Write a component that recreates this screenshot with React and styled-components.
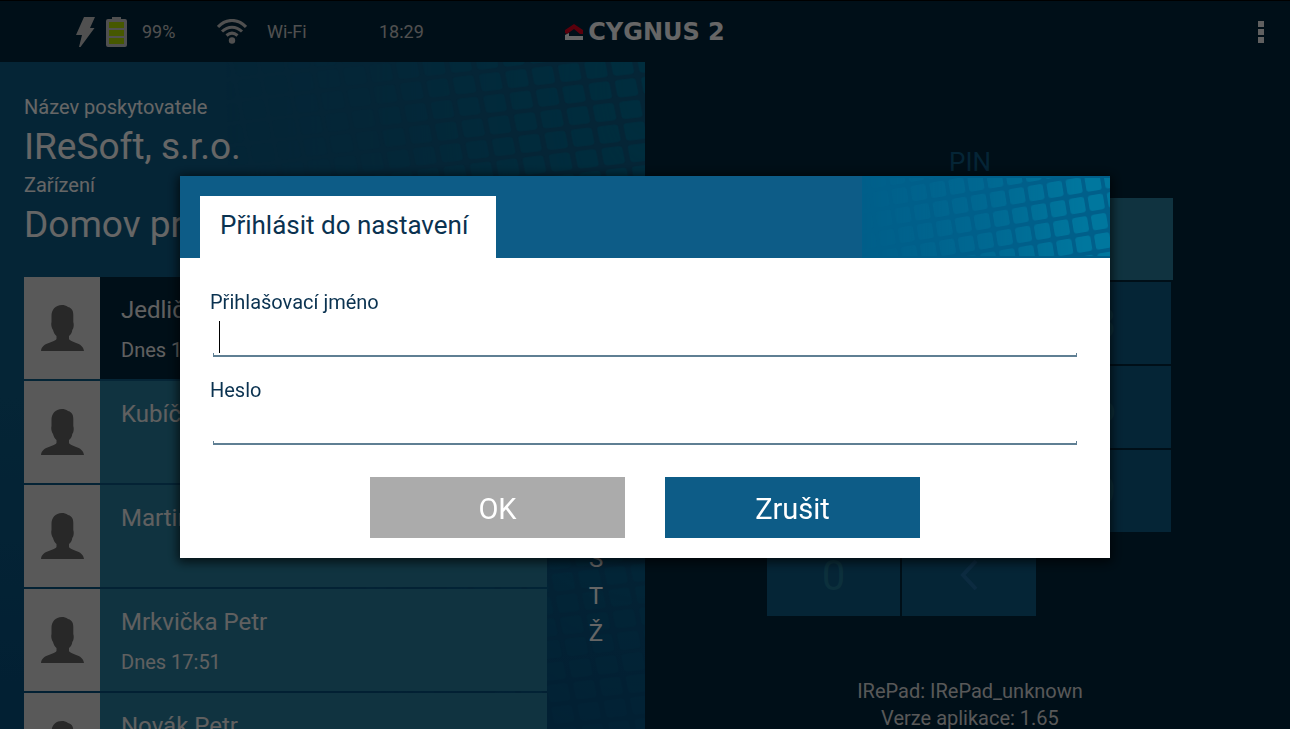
import React, { useState } from "react";
import styled, { createGlobalStyle } from "styled-components";

const people = [
  { name: "Jedlička Jan", time: "Dnes 17:58", active: true },
  { name: "Kubíčková Jana" },
  { name: "Martinů Karel" },
  { name: "Mrkvička Petr", time: "Dnes 17:51" },
  { name: "Novák Petr" },
];

const letters = ["J", "K", "L", "M", "N", "P", "R", "S", "T", "Ž"];
const keys = ["1", "2", "3", "4", "5", "6", "7", "8", "9", "0"];

const BoltIcon = () => (
  <svg width="20" height="30" viewBox="0 0 20 30" aria-hidden="true">
    <path d="M8 0h11l-5 11h4.500L4.500 30H3l3-12H0z" fill="#c8c8c8" />
  </svg>
);

const BatteryIcon = () => (
  <svg width="21" height="30" viewBox="0 0 21 30" aria-hidden="true">
    <path
      d="M6 0h9v2h4a2 2 0 0 1 2 2v24a2 2 0 0 1-2 2H2a2 2 0 0 1-2-2V4a2 2 0 0 1 2-2h4z"
      fill="#c8c8c8"
    />
    <path d="M3 5h15v6H3zM3 13h15v6H3zM3 21h15v6H3z" fill="#b0dc00" />
  </svg>
);

const WifiIcon = () => (
  <svg width="30" height="26" viewBox="0 0 30 26" aria-hidden="true">
    <g fill="none" stroke="#c8c8c8" strokeWidth="3">
      <path d="M1 8C9-.8 21-.8 29 8" />
      <path d="M5 12.500c6-5.800 14-5.800 20 0" />
      <path d="M9.500 16.500c3.500-3 7.500-3 11 0" />
    </g>
    <circle cx="15" cy="21.500" r="3.200" fill="#c8c8c8" />
  </svg>
);

const HouseIcon = () => (
  <svg width="18" height="16" viewBox="0 0 18 16" aria-hidden="true">
    <path d="M0 9V6l9-6 9 6v4h-3L9 5 2 10z" fill="#e0001f" />
    <path d="M0 11l4-2v3h14v4H0z" fill="#fff" />
  </svg>
);

const PersonIcon = () => (
  <svg width="43" height="46" viewBox="0 0 43 46" aria-hidden="true">
    <path
      d="M21 0C14 0 10.500 5 10.500 11v6C9.800 19 10.500 23 12 25c.8 3 2 5 3.500 6v3C13 38 1 37 0 46h43c-1-9-13-8-15-12v-3c1.500-1 3-3 3.300-6 1.700-2 1.700-6 1-8v-7c.2-6-3.300-7.500-5.300-8-2-1.400-4-2-6-2z"
      fill="#646464"
    />
  </svg>
);

const BackIcon = () => (
  <svg width="18" height="30" viewBox="0 0 18 30" aria-hidden="true">
    <path d="M16 1L3 15l13 14" fill="none" stroke="#1f6ba0" strokeWidth="4" />
  </svg>
);

const PanelTiles = () => (
  <svg width="420" height="668" viewBox="0 0 420 668" aria-hidden="true">
    <defs>
      <pattern
        id="panelTile"
        width="20"
        height="20"
        patternUnits="userSpaceOnUse"
        patternTransform="matrix(1.315 -0.155 0.215 1.08 382 -5)"
      >
        <rect x="2" y="2" width="16" height="16" rx="3" fill="#00729c" />
      </pattern>
      <radialGradient
        id="panelFade"
        gradientUnits="userSpaceOnUse"
        cx="420"
        cy="20"
        r="420"
        gradientTransform="matrix(1 0 0 2 0 -20)"
      >
        <stop offset="0" stopColor="#fff" />
        <stop offset="0.300" stopColor="#fff" stopOpacity="0.700" />
        <stop offset="0.600" stopColor="#fff" stopOpacity="0.250" />
        <stop offset="1" stopColor="#fff" stopOpacity="0" />
      </radialGradient>
      <mask id="panelMask">
        <rect width="420" height="668" fill="url(#panelFade)" />
      </mask>
    </defs>
    <rect width="420" height="668" fill="url(#panelTile)" mask="url(#panelMask)" />
  </svg>
);

const HeaderTiles = () => (
  <svg width="248" height="82" viewBox="0 0 248 82" aria-hidden="true">
    <defs>
      <pattern
        id="headTile"
        width="20"
        height="20"
        patternUnits="userSpaceOnUse"
        patternTransform="matrix(0.950 -0.160 0.160 0.965 220 -1)"
      >
        <rect x="2" y="2" width="16" height="16" rx="3" fill="#00779e" />
      </pattern>
      <linearGradient id="headFade">
        <stop offset="0" stopColor="#fff" stopOpacity="0" />
        <stop offset="0.500" stopColor="#fff" stopOpacity="0.400" />
        <stop offset="0.900" stopColor="#fff" />
      </linearGradient>
      <mask id="headMask">
        <rect width="248" height="82" fill="url(#headFade)" />
      </mask>
    </defs>
    <rect width="248" height="82" fill="#005f8a" />
    <rect y="2" width="248" height="78" fill="url(#headTile)" mask="url(#headMask)" />
  </svg>
);

const App = () => {
  const [login, setLogin] = useState("");
  const [password, setPassword] = useState("");

  return (
    <Page>
      <GlobalStyle />
      <TopBar>
        <Status>
          <Battery>
            <BoltIcon />
            <BatteryIcon />
          </Battery>
          <StatusText $width={75}>99%</StatusText>
          <WifiIcon />
          <StatusText $width={112}>Wi-Fi</StatusText>
          <StatusText>18:29</StatusText>
        </Status>
        <Logo>
          <HouseIcon />
          CYGNUS 2
        </Logo>
        <MenuButton aria-label="Menu">
          <i />
          <i />
          <i />
        </MenuButton>
      </TopBar>
      <Main>
        <Panel>
          <Pattern>
            <PanelTiles />
          </Pattern>
          <Provider>
            <dt>Název poskytovatele</dt>
            <dd>IReSoft, s.r.o.</dd>
            <dt>Zařízení</dt>
            <dd>Domov pro seniory</dd>
          </Provider>
          <Columns>
            <People>
              {people.map((person) => (
                <Person key={person.name} $active={person.active}>
                  <Avatar>
                    <PersonIcon />
                  </Avatar>
                  <PersonText>
                    <strong>{person.name}</strong>
                    {person.time && <span>{person.time}</span>}
                  </PersonText>
                </Person>
              ))}
            </People>
            <Letters>
              {letters.map((letter) => (
                <li key={letter}>{letter}</li>
              ))}
            </Letters>
          </Columns>
        </Panel>
        <PinSide>
          <PinLabel>PIN</PinLabel>
          <Keypad>
            <Display />
            <Keys>
              {keys.map((key) => (
                <Key key={key}>{key}</Key>
              ))}
              <Key aria-label="Smazat">
                <BackIcon />
              </Key>
            </Keys>
          </Keypad>
          <Version>
            IRePad: IRePad_unknown
            <br />
            Verze aplikace: 1.65
          </Version>
        </PinSide>
      </Main>
      <Overlay>
        <Dialog role="dialog" aria-labelledby="dialogTitle">
          <DialogHeader>
            <DialogTitle id="dialogTitle">Přihlásit do nastavení</DialogTitle>
            <HeaderTiles />
          </DialogHeader>
          <Form onSubmit={(e) => e.preventDefault()}>
            <Field>
              <label htmlFor="login">Přihlašovací jméno</label>
              <InputWrap>
                <input
                  type="text"
                  id="login"
                  value={login}
                  onChange={(e) => setLogin(e.target.value)}
                />
                {!login && <Caret />}
              </InputWrap>
            </Field>
            <Field>
              <label htmlFor="password">Heslo</label>
              <InputWrap>
                <input
                  type="password"
                  id="password"
                  value={password}
                  onChange={(e) => setPassword(e.target.value)}
                />
              </InputWrap>
            </Field>
            <Buttons>
              <Button type="submit" $muted>
                OK
              </Button>
              <Button type="button">Zrušit</Button>
            </Buttons>
          </Form>
        </Dialog>
      </Overlay>
    </Page>
  );
};

const GlobalStyle = createGlobalStyle`
  * {
    box-sizing: border-box;
  }
  body {
    margin: 0;
    background: #000f18;
  }
  body, button, input {
    font-family: Roboto, "Liberation Sans", sans-serif;
  }
  svg {
    display: block;
    flex-shrink: 0;
  }
`;

const Page = styled.div`
  height: 100vh;
  display: flex;
  flex-direction: column;
  overflow: hidden;
  color: #fff;
  background: #00263c;
`;

const TopBar = styled.header`
  display: grid;
  grid-template-columns: 1fr auto 1fr;
  align-items: center;
  height: 62px;
  flex-shrink: 0;
  border-top: 1px solid #000;
`;

const Status = styled.div`
  display: flex;
  align-items: center;
  padding-left: 76px;
  font-size: 18px;
  color: #c8c8c8;
`;

const Battery = styled.div`
  display: flex;
  gap: 10px;
  margin-right: 15px;
`;

const StatusText = styled.span`
  width: ${(props) => (props.$width ? `${props.$width}px` : "auto")};

  svg + & {
    margin-left: 20px;
  }
`;

const Logo = styled.div`
  display: flex;
  align-items: center;
  gap: 5px;
  font: bold 24px/24px "DejaVu Sans", sans-serif;
`;

const MenuButton = styled.button`
  display: flex;
  flex-direction: column;
  gap: 2px;
  justify-self: end;
  margin-right: 22px;
  padding: 4px;
  border: 0;
  background: none;

  i {
    width: 6px;
    height: 6px;
    background: #f0f0f0;
  }
`;

const Main = styled.main`
  flex: 1;
  min-height: 0;
  display: grid;
  grid-template-columns: 1fr 1fr;
`;

const Panel = styled.section`
  position: relative;
  min-height: 0;
  overflow: hidden;
  padding: 32px 0 0 24px;
  background: linear-gradient(#0d5c87 50%, #065080);
`;

const Pattern = styled.div`
  position: absolute;
  top: 0;
  right: 0;
`;

const Provider = styled.dl`
  position: relative;
  margin: 0 0 27px;

  dt {
    font-size: 20px;
    line-height: 27px;
  }
  dd {
    margin: 0;
    font-size: 37px;
    line-height: 51px;
  }
`;

const Columns = styled.div`
  position: relative;
  display: flex;
`;

const People = styled.ul`
  flex: 1;
  display: flex;
  flex-direction: column;
  gap: 2px;
  margin: 0;
  padding: 0;
  list-style: none;
`;

const Person = styled.li`
  display: flex;
  height: 102px;
  background: ${(props) => (props.$active ? "#00263c" : "#2880a0")};
`;

const Avatar = styled.div`
  display: flex;
  align-items: center;
  justify-content: center;
  width: 76px;
  background: #dedede;
`;

const PersonText = styled.div`
  display: flex;
  flex-direction: column;
  gap: 10px;
  padding: 18px 21px;
  color: #f0f0f0;

  strong {
    font-size: 24px;
    font-weight: 400;
    line-height: 30px;
  }
  span {
    font-size: 20px;
    line-height: 30px;
  }
`;

const Letters = styled.ul`
  width: 98px;
  margin: 0;
  padding: 5px 0 0;
  list-style: none;
  font-size: 24px;
  line-height: 37px;
  text-align: center;
`;

const PinSide = styled.section`
  display: flex;
  flex-direction: column;
  align-items: center;
  padding: 84px 0 0 5px;
`;

const PinLabel = styled.div`
  margin-bottom: 20px;
  font-size: 26px;
  line-height: 32px;
  color: #0d5c87;
`;

const Keypad = styled.div`
  display: flex;
  flex-direction: column;
  gap: 2px;
  width: 406px;
`;

const Display = styled.div`
  height: 82px;
  background: #2880a0;
`;

const Keys = styled.div`
  display: grid;
  grid-template-columns: repeat(3, 1fr);
  grid-auto-rows: 82px;
  gap: 2px;
  margin-right: 2px;
`;

const Key = styled.button`
  display: flex;
  align-items: center;
  justify-content: center;
  padding: 0;
  border: 0;
  background: #0d5c87;
  color: #1f7896;
  font-size: 42px;
`;

const Version = styled.p`
  margin: 62px 0 0;
  font-size: 20px;
  line-height: 27px;
  text-align: center;
  color: #dcdcdc;
`;

const Overlay = styled.div`
  position: fixed;
  inset: 0;
  display: flex;
  align-items: center;
  justify-content: center;
  padding: 24px 180px 20px;
  background: rgba(0, 0, 0, 0.6);
`;

const Dialog = styled.div`
  flex: 1;
  background: #fff;
  color: #0a3250;
  box-shadow: 0 2px 10px 2px rgba(0, 0, 0, 0.7);
`;

const DialogHeader = styled.div`
  display: flex;
  justify-content: space-between;
  align-items: flex-end;
  padding-left: 20px;
  background: #0d5c87;
`;

const DialogTitle = styled.h1`
  margin: 0;
  padding: 0 28px 4px 20px;
  background: #fff;
  font-size: 26px;
  font-weight: 400;
  line-height: 58px;
`;

const Form = styled.form`
  padding: 32px 30px 20px;
`;

const Field = styled.div`
  margin-bottom: 21px;

  label {
    display: block;
    font-size: 20px;
    line-height: 24px;
  }
`;

const InputWrap = styled.div`
  position: relative;
  margin: 0 3px;

  input {
    display: block;
    width: 100%;
    height: 43px;
    padding: 0 6px;
    border: 0;
    outline: none;
    font-size: 24px;
    color: #0a3250;
    background:
      linear-gradient(#5f7f93, #5f7f93) bottom / 100% 2px no-repeat,
      linear-gradient(#5f7f93, #5f7f93) left bottom / 1px 4px no-repeat,
      linear-gradient(#5f7f93, #5f7f93) right bottom / 1px 4px no-repeat;
  }
`;

const Caret = styled.span`
  position: absolute;
  top: 7px;
  left: 6px;
  width: 1px;
  height: 32px;
  background: #000;
`;

const Buttons = styled.div`
  display: flex;
  justify-content: center;
  gap: 40px;
  padding-top: 11px;
`;

const Button = styled.button`
  width: 255px;
  height: 61px;
  padding: 4px 0 0;
  border: 0;
  background: ${(props) => (props.$muted ? "#ababab" : "#0d5c87")};
  color: #fff;
  font-size: 29px;
`;

export default App;
